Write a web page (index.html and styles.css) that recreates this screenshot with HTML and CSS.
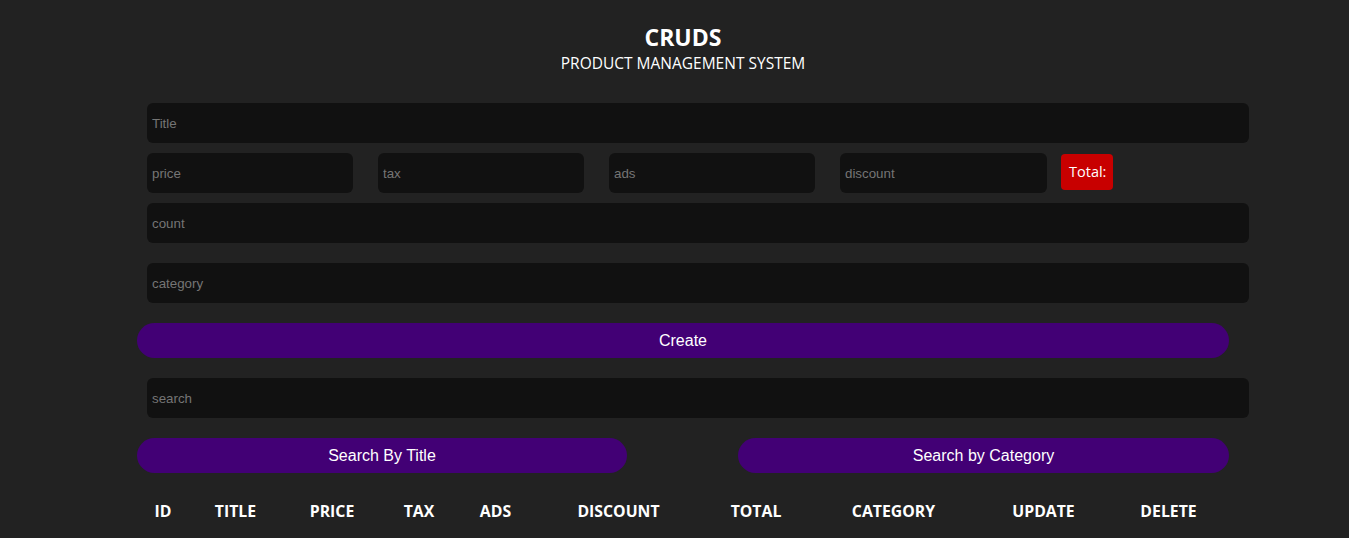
FILE: index.html
```html
<!DOCTYPE html>
<html lang="en">
<head>
<meta charset="UTF-8">
<title>CRUDS</title>
<link rel="stylesheet" href="styles.css">
</head>
<body>
<header class="head">
  <h2 class="head-title">CRUDS</h2>
  <p class="head-sub">PRODUCT MANAGEMENT SYSTEM</p>
</header>
<main class="crud">
  <div class="inputs">
    <input class="field" type="text" placeholder="Title">
    <div class="price">
      <input class="field field-sm" type="number" placeholder="price">
      <input class="field field-sm" type="number" placeholder="tax">
      <input class="field field-sm" type="number" placeholder="ads">
      <input class="field field-sm field-last" type="number" placeholder="discount">
      <small class="total">Total:</small>
    </div>
    <input class="field" type="number" placeholder="count">
    <input class="field gap-top" type="text" placeholder="category">
    <button class="btn btn-wide">Create</button>
  </div>
  <div class="search-block">
    <input class="field" type="text" placeholder="search">
    <div class="btn-search">
      <button class="btn btn-half">Search By Title</button>
      <button class="btn btn-half">Search by Category</button>
    </div>
  </div>
  <div class="table">
    <div class="thead">
      <span>ID</span>
      <span>TITLE</span>
      <span>PRICE</span>
      <span>TAX</span>
      <span>ADS</span>
      <span>DISCOUNT</span>
      <span>TOTAL</span>
      <span>CATEGORY</span>
      <span>UPDATE</span>
      <span>DELETE</span>
    </div>
  </div>
</main>
</body>
</html>
```

FILE: styles.css
```css
* {
  box-sizing: border-box;
}

html, body {
  margin: 0;
  padding: 0;
}

body {
  background: #222222;
  color: #ffffff;
  font-family: "Open Sans", "Noto Sans", sans-serif;
  height: 538px;
  overflow: hidden;
}

.head {
  text-align: center;
  padding: 22px 0 0 17px;
}

.head-title {
  margin: 0;
  font-size: 23px;
  font-weight: 700;
  line-height: 30px;
}

.head-sub {
  margin: 0;
  font-size: 15.5px;
  line-height: 22px;
}

.crud {
  margin-left: 147px;
  width: 1102px;
  padding-top: 29px;
}

.inputs {
  display: flex;
  flex-direction: column;
}

.field {
  display: block;
  width: 100%;
  height: 40px;
  border: none;
  outline: none;
  background: #111111;
  border-radius: 6px;
  padding: 0 5px;
  color: #ffffff;
  font-family: "Liberation Sans", Arial, sans-serif;
  font-size: 13.33px;
  margin: 0;
}

.field::placeholder {
  color: #757575;
}

.price {
  display: flex;
  align-items: flex-start;
  gap: 25px;
  margin: 10px 0;
}

.field-sm {
  width: 206px;
  flex: 0 0 206px;
}

.field-last {
  flex-basis: 207px;
  width: 207px;
}

.total {
  margin: 1px 0 0 -11px;
  background: #c80000;
  color: #ffffff;
  font-family: "Open Sans", "Noto Sans", sans-serif;
  font-size: 14.5px;
  line-height: 36px;
  height: 36px;
  padding: 0 7px 0 8px;
  border-radius: 4px;
}

.gap-top {
  margin-top: 20px;
}

.btn {
  display: block;
  height: 35px;
  border: none;
  border-radius: 18px;
  background: #420075;
  color: #ffffff;
  font-family: "Liberation Sans", Arial, sans-serif;
  font-size: 16px;
  cursor: pointer;
  padding: 0;
}

.btn-wide {
  margin: 20px 0 0 -10px;
  width: 1092px;
}

.search-block {
  margin-top: 20px;
}

.btn-search {
  display: flex;
  justify-content: space-between;
  margin: 20px 0 0 -10px;
  width: 1092px;
}

.btn-half {
  width: 490px;
}

.btn-half + .btn-half {
  width: 491px;
}

.table {
  margin-top: 28px;
}

.thead {
  display: grid;
  grid-template-columns: 32px 113px 80px 94px 59px 187px 88px 187px 113px 137px;
  font-weight: 700;
  font-size: 15.8px;
  line-height: 20px;
}

.thead span {
  text-align: center;
}
```
